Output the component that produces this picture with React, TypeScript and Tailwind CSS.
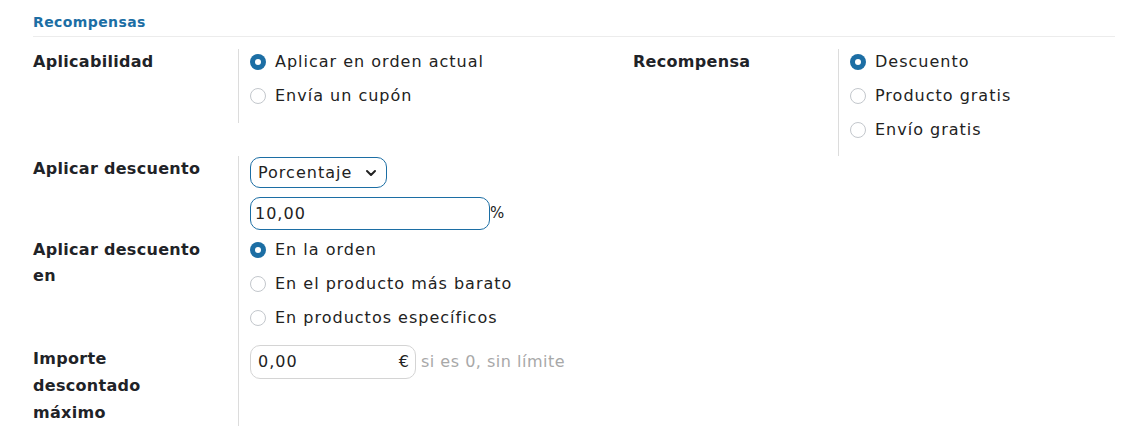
import { ChevronDown } from "lucide-react";

const BLUE = "#1c6ea4";

type Opt = { label: string; checked?: boolean };

const Radio = ({ label, checked }: Opt) => (
  <label className="flex h-[26px] items-center gap-[9px]">
    {checked ? (
      <span className="flex h-[16px] w-[16px] items-center justify-center rounded-full bg-[#1c6ea4]">
        <span className="h-[6px] w-[6px] rounded-full bg-white" />
      </span>
    ) : (
      <span className="h-[16px] w-[16px] rounded-full border border-[#c3c7cc] bg-white" />
    )}
    <span>{label}</span>
  </label>
);

const RadioGroup = ({ options }: { options: Opt[] }) => (
  <div className="flex flex-col gap-[8px]">
    {options.map((o) => (
      <Radio key={o.label} {...o} />
    ))}
  </div>
);

const Label = ({ children }: { children: React.ReactNode }) => (
  <div className="w-[205px] shrink-0 pr-4 font-bold leading-[26px] tracking-[0.3px] text-[#1f2328]">
    {children}
  </div>
);

const App = () => {
  return (
    <div
      className="h-[445px] w-[1148px] bg-white px-[33px] text-[16px] tracking-[1px] text-[#222]"
      style={{ fontFamily: '"DejaVu Sans", "Open Sans", sans-serif' }}
    >
      <div className="border-b border-[#ececec] pt-[12px] pb-[4px] text-[14px] font-semibold leading-[20px] tracking-[0.4px] text-[#1c6ea4]">
        Recompensas
      </div>

      {/* aplicabilidad / recompensa */}
      <div className="mt-[12px] flex">
        <div className="flex w-[600px] items-start">
          <Label>Aplicabilidad</Label>
          <div className="border-l border-[#dcdcdc] pb-[14px] pl-[11px]">
            <RadioGroup
              options={[
                { label: "Aplicar en orden actual", checked: true },
                { label: "Envía un cupón" },
              ]}
            />
          </div>
        </div>
        <div className="flex flex-1 items-start">
          <Label>Recompensa</Label>
          <div className="border-l border-[#dcdcdc] pb-[13px] pl-[11px]">
            <RadioGroup
              options={[
                { label: "Descuento", checked: true },
                { label: "Producto gratis" },
                { label: "Envío gratis" },
              ]}
            />
          </div>
        </div>
      </div>

      {/* descuento */}
      <div className="flex w-[600px]">
        <Label>Aplicar descuento</Label>
        <div className="flex-1 border-l border-[#dcdcdc] pt-[1px] pb-[7px] pl-[11px]">
          <div
            className="flex h-[31px] w-[137px] items-center justify-between rounded-[10px] border px-[7px]"
            style={{ borderColor: BLUE }}
          >
            <span>Porcentaje</span>
            <ChevronDown className="h-4 w-4" strokeWidth={3} />
          </div>
          <div className="mt-[9px] flex items-center">
            <div
              className="flex h-[33px] w-[240px] items-center rounded-[10px] border px-[4px]"
              style={{ borderColor: BLUE }}
            >
              10,00
            </div>
            <span className="text-[15px]">%</span>
          </div>
        </div>
      </div>

      <div className="flex w-[600px]">
        <Label>
          Aplicar descuento
          <br />
          en
        </Label>
        <div className="flex-1 border-l border-[#dcdcdc] pb-[14px] pl-[11px]">
          <RadioGroup
            options={[
              { label: "En la orden", checked: true },
              { label: "En el producto más barato" },
              { label: "En productos específicos" },
            ]}
          />
        </div>
      </div>

      <div className="flex w-[600px]">
        <div className="w-[205px] shrink-0 pr-4 font-bold leading-[27px] tracking-[0.3px] text-[#1f2328]">
          Importe
          <br />
          descontado
          <br />
          máximo
        </div>
        <div className="flex flex-1 items-start border-l border-[#dcdcdc] pl-[11px]">
          <div className="flex h-[34px] w-[166px] items-center justify-between rounded-[10px] border border-[#d4d4d4] pr-[5px] pl-[7px]">
            <span>0,00</span>
            <span>€</span>
          </div>
          <span className="ml-[5px] leading-[34px] tracking-[0.5px] text-[#a8a8a8]">
            si es 0, sin límite
          </span>
        </div>
      </div>
    </div>
  );
};

export default App;
